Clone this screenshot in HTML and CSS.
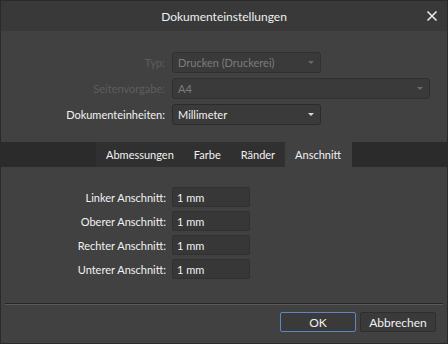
FILE: index.html
```html
<!DOCTYPE html>
<html lang="de">
<head>
    <meta charset="UTF-8" />
    <title>Dokumenteinstellungen</title>
    <link rel="stylesheet" href="styles.css">
</head>
<body>
    <div class="dialog">
        <div class="titlebar">
            <div class="title">Dokumenteinstellungen</div>
            <svg class="close" width="12" height="12" viewBox="0 0 12 12">
                <path d="M1.5 1.5 L10.5 10.5 M10.5 1.5 L1.5 10.5" stroke="#e8e8e8" stroke-width="1.6" fill="none"/>
            </svg>
        </div>

        <div class="form">
            <div class="row disabled">
                <div class="label">Typ:</div>
                <div class="select short">Drucken (Druckerei)<span class="arrow"></span></div>
            </div>
            <div class="row disabled">
                <div class="label">Seitenvorgabe:</div>
                <div class="select long">A4<span class="arrow"></span></div>
            </div>
            <div class="row">
                <div class="label">Dokumenteinheiten:</div>
                <div class="select short">Millimeter<span class="arrow"></span></div>
            </div>
        </div>

        <div class="tabbar">
            <div class="tabs">
                <div class="tab">Abmessungen</div>
                <div class="tab">Farbe</div>
                <div class="tab">Ränder</div>
                <div class="tab active">Anschnitt</div>
            </div>
        </div>

        <div class="fields">
            <div class="field">
                <div class="flabel">Linker Anschnitt:</div>
                <div class="input">1 mm</div>
            </div>
            <div class="field">
                <div class="flabel">Oberer Anschnitt:</div>
                <div class="input">1 mm</div>
            </div>
            <div class="field">
                <div class="flabel">Rechter Anschnitt:</div>
                <div class="input">1 mm</div>
            </div>
            <div class="field">
                <div class="flabel">Unterer Anschnitt:</div>
                <div class="input">1 mm</div>
            </div>
        </div>

        <div class="separator"></div>

        <div class="buttons">
            <button class="btn primary">OK</button>
            <button class="btn">Abbrechen</button>
        </div>
    </div>
</body>
</html>
```

FILE: styles.css
```css
body {
    margin: 0;
    background-color: #2b2b2b;
    font-family: Lato, "Noto Sans", sans-serif;
    font-size: 11px;
    color: #e6e6e6;
}

.dialog {
    width: 446px;
    height: 342px;
    border: 1px solid #2a2a2a;
    background-color: #414141;
    display: flex;
    flex-direction: column;
}

.titlebar {
    height: 30px;
    background-color: #393939;
    display: flex;
    align-items: center;
    justify-content: center;
    position: relative;
}

.title {
    font-size: 12px;
    color: #f0f0f0;
}

.close {
    position: absolute;
    right: 9px;
    top: 9px;
}

.form {
    padding-top: 21px;
    display: flex;
    flex-direction: column;
    gap: 5px;
}

.row {
    display: flex;
    align-items: center;
    height: 21px;
}

.label {
    width: 171px;
    flex-shrink: 0;
    text-align: right;
    padding-right: 7px;
    box-sizing: border-box;
    color: #f2f2f2;
}

.select {
    height: 21px;
    box-sizing: border-box;
    border: 1px solid #2b2b2b;
    border-radius: 3px;
    background-color: #3a3a3a;
    padding-left: 5px;
    display: flex;
    align-items: center;
    position: relative;
    color: #f2f2f2;
}

.select.short {
    width: 149px;
}

.select.long {
    width: 258px;
}

.arrow {
    position: absolute;
    right: 6px;
    top: 8px;
    border-left: 3px solid transparent;
    border-right: 3px solid transparent;
    border-top: 3px solid #d8d8d8;
}

.row.disabled .label {
    color: #5d5d5d;
}

.row.disabled .select {
    color: #7d7d7d;
    border-color: #303030;
}

.row.disabled .arrow {
    border-top-color: #6a6a6a;
}

.tabbar {
    margin-top: 17px;
    height: 25px;
    background-color: #2b2b2b;
    display: flex;
    padding-left: 95px;
}

.tabs {
    display: flex;
    background-color: #303030;
}

.tab {
    display: flex;
    align-items: center;
    padding: 0 10px;
    color: #f2f2f2;
}

.tab.active {
    background-color: #414141;
    padding: 0 11px 0 10px;
}

.fields {
    padding-top: 20px;
    display: flex;
    flex-direction: column;
    gap: 4px;
}

.field {
    display: flex;
    align-items: center;
    height: 20px;
}

.flabel {
    width: 171px;
    flex-shrink: 0;
    text-align: right;
    padding-right: 6px;
    box-sizing: border-box;
    color: #f2f2f2;
}

.input {
    width: 78px;
    height: 20px;
    box-sizing: border-box;
    border: 1px solid #313131;
    border-radius: 2px;
    background-color: #373737;
    padding-left: 4px;
    display: flex;
    align-items: center;
    color: #f2f2f2;
}

.separator {
    margin: 24px 4px 0 4px;
    height: 1px;
    background-color: #262626;
    border-bottom: 1px solid #5a5a5a;
}

.buttons {
    display: flex;
    justify-content: flex-end;
    gap: 4px;
    padding: 7px 11px 0 0;
}

.btn {
    width: 76px;
    height: 20px;
    font-family: Lato, "Noto Sans", sans-serif;
    font-size: 12px;
    color: #f2f2f2;
    background-color: #3a3a3a;
    border: 1px solid #2e2e2e;
    border-radius: 2px;
    padding: 0;
}

.btn.primary {
    border-color: #5f86c4;
}
```
